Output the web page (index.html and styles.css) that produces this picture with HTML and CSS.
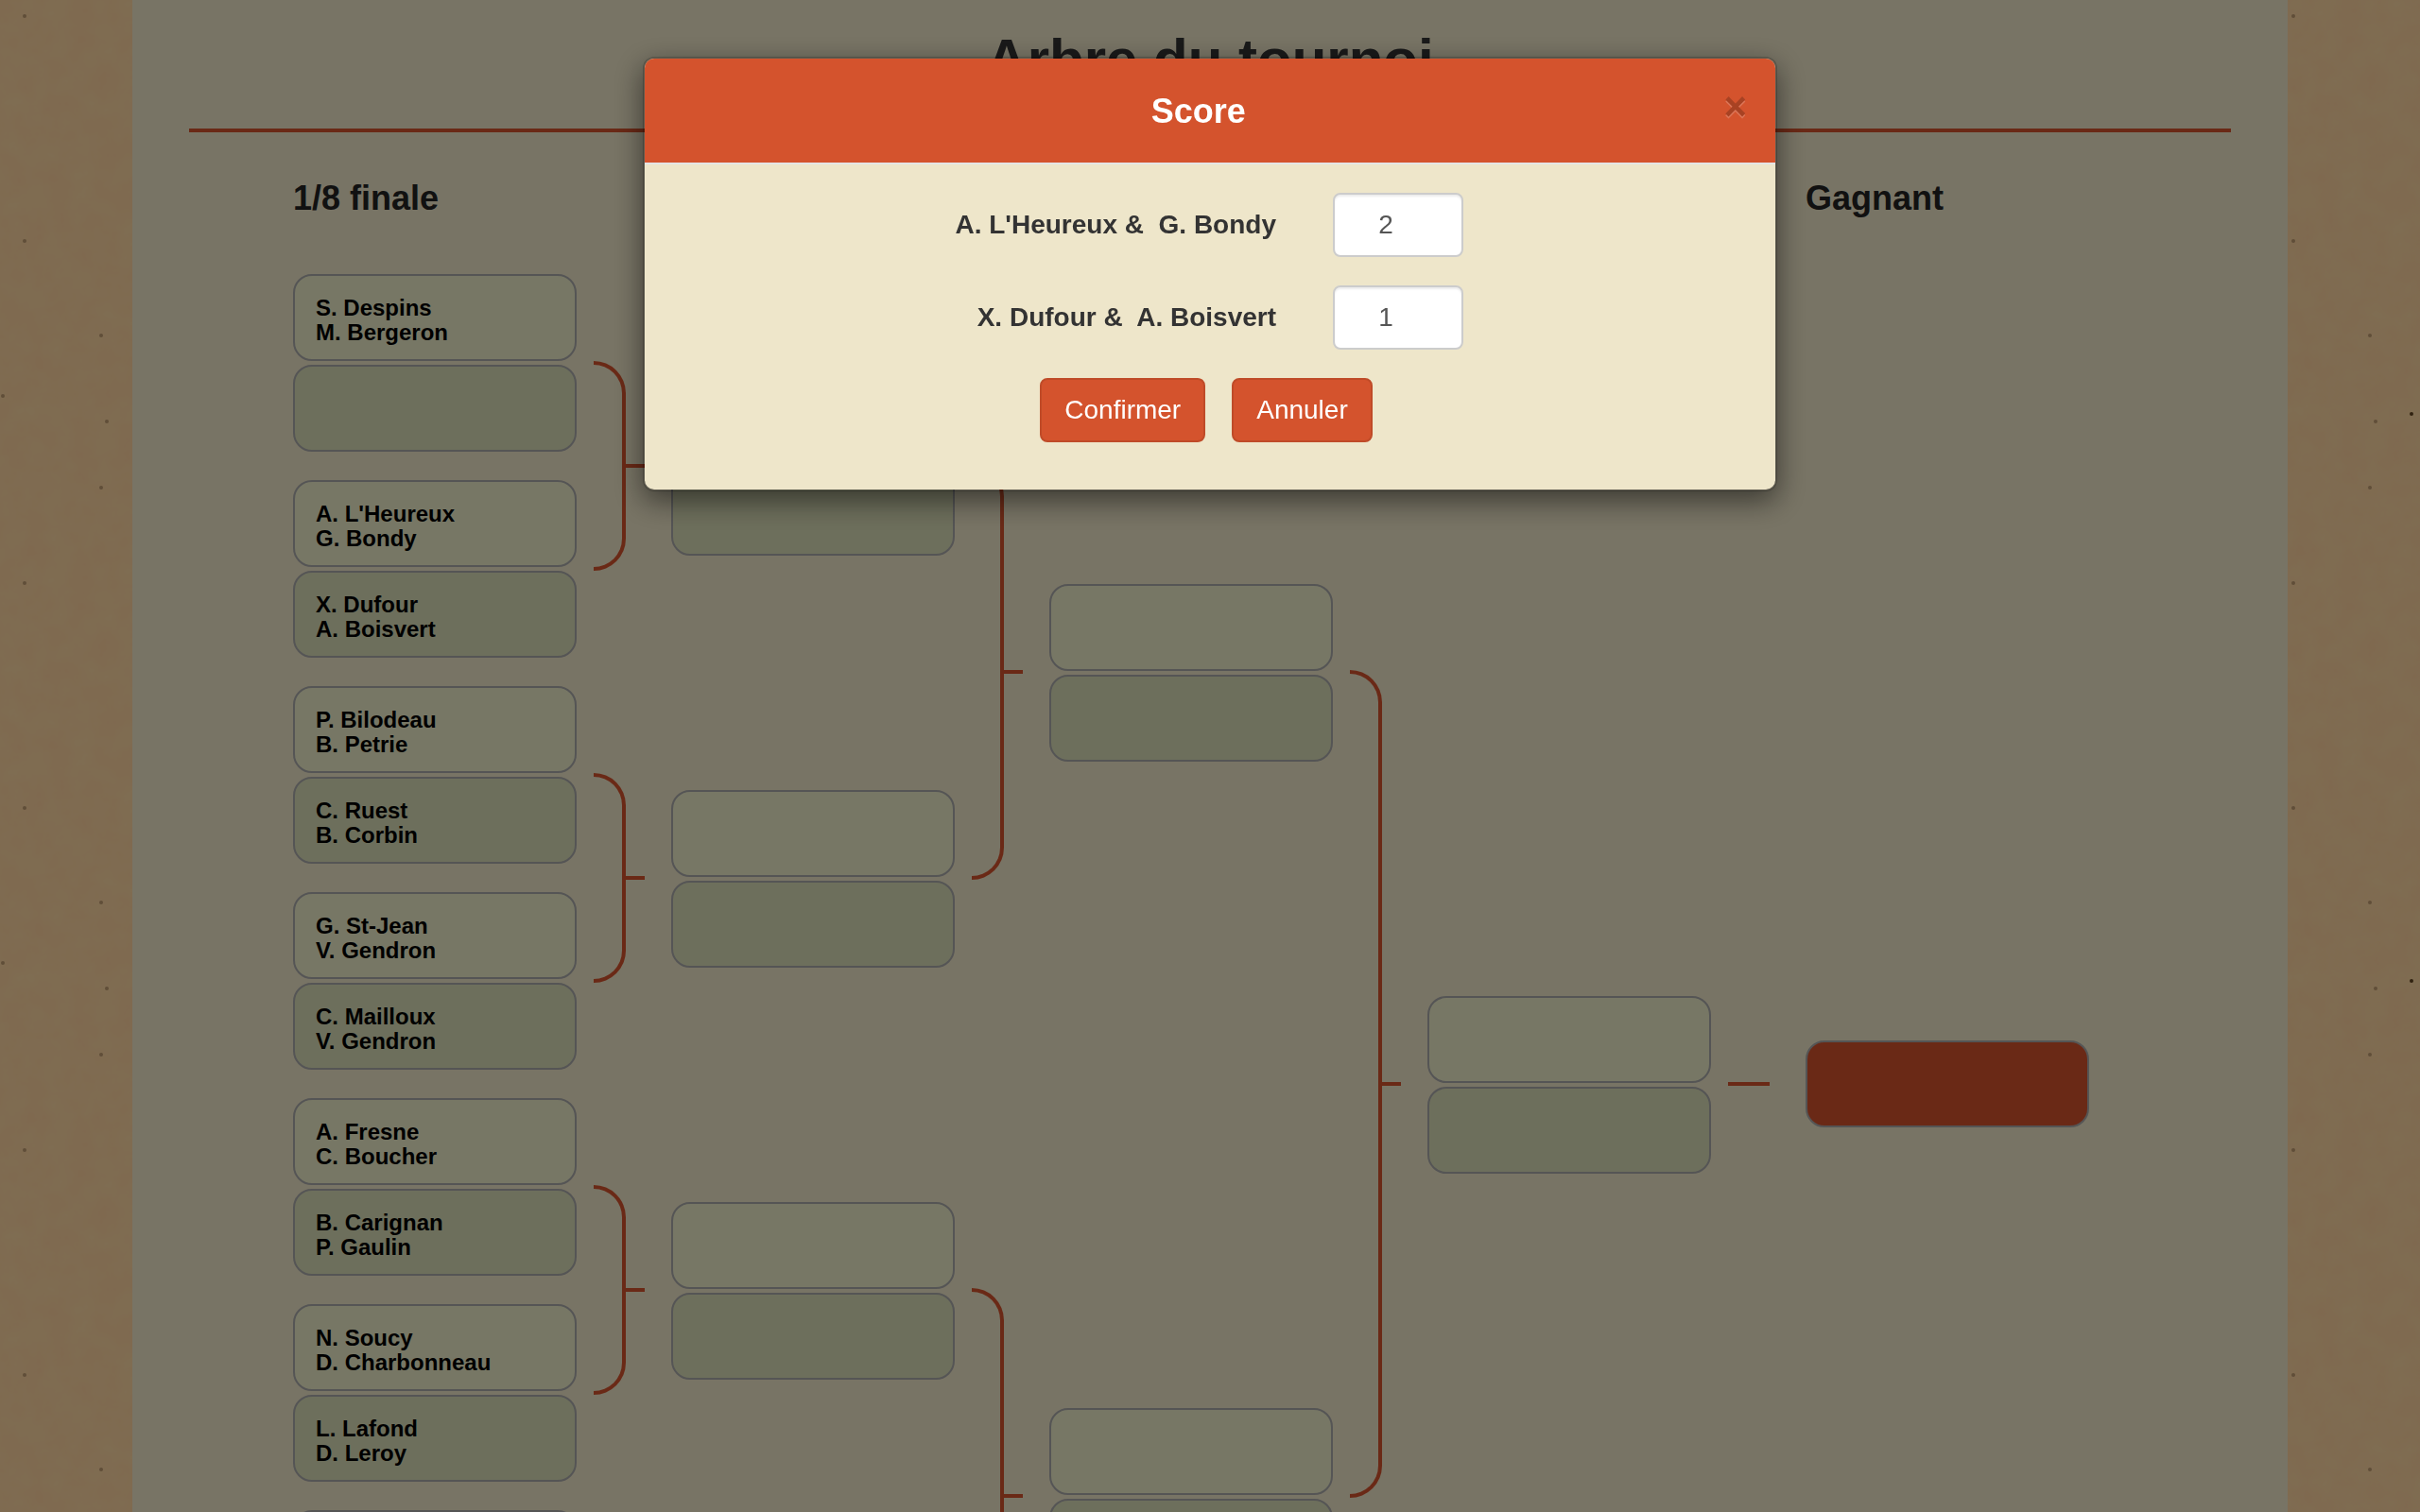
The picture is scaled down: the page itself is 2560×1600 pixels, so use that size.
FILE: index.html
```html
<!DOCTYPE html>
<html lang="fr">
<head>
<meta charset="utf-8">
<title>Arbre du tournoi</title>
<link rel="stylesheet" href="styles.css">
</head>
<body>
<main class="page">
  <h1 class="page-title">Arbre du tournoi</h1>
  <hr class="rule">
  <div class="tree round-names">
    <h2 class="round-name">1/8 finale</h2>
    <h2 class="round-name round-name-winner">Gagnant</h2>
  </div>
  <div class="tree">
    <div class="round round-first">
      <div class="match"><div class="team">S. Despins<br>M. Bergeron</div><div class="team"></div></div>
      <div class="match"><div class="team">A. L'Heureux<br>G. Bondy</div><div class="team">X. Dufour<br>A. Boisvert</div></div>
      <div class="match"><div class="team">P. Bilodeau<br>B. Petrie</div><div class="team">C. Ruest<br>B. Corbin</div></div>
      <div class="match"><div class="team">G. St-Jean<br>V. Gendron</div><div class="team">C. Mailloux<br>V. Gendron</div></div>
      <div class="match"><div class="team">A. Fresne<br>C. Boucher</div><div class="team">B. Carignan<br>P. Gaulin</div></div>
      <div class="match"><div class="team">N. Soucy<br>D. Charbonneau</div><div class="team">L. Lafond<br>D. Leroy</div></div>
      <div class="match"><div class="team"></div><div class="team"></div></div>
      <div class="match"><div class="team"></div><div class="team"></div></div>
    </div>
    <div class="links">
      <div class="link"><span class="bracket"></span><span class="stub"></span></div>
      <div class="link"><span class="bracket"></span><span class="stub"></span></div>
      <div class="link"><span class="bracket"></span><span class="stub"></span></div>
      <div class="link"><span class="bracket"></span><span class="stub"></span></div>
    </div>
    <div class="round">
      <div class="match"><div class="team"></div><div class="team"></div></div>
      <div class="match"><div class="team"></div><div class="team"></div></div>
      <div class="match"><div class="team"></div><div class="team"></div></div>
      <div class="match"><div class="team"></div><div class="team"></div></div>
    </div>
    <div class="links">
      <div class="link"><span class="bracket"></span><span class="stub"></span></div>
      <div class="link"><span class="bracket"></span><span class="stub"></span></div>
    </div>
    <div class="round">
      <div class="match"><div class="team"></div><div class="team"></div></div>
      <div class="match"><div class="team"></div><div class="team"></div></div>
    </div>
    <div class="links">
      <div class="link"><span class="bracket"></span><span class="stub"></span></div>
    </div>
    <div class="round">
      <div class="match"><div class="team"></div><div class="team"></div></div>
    </div>
    <div class="links">
      <div class="link"><span class="stub stub-long"></span></div>
    </div>
    <div class="round">
      <div class="team team-winner"></div>
    </div>
  </div>
</main>

<div class="backdrop">
  <div class="modal" role="dialog" aria-modal="true" aria-labelledby="score-title">
    <div class="modal-header">
      <h4 class="modal-title" id="score-title">Score</h4>
      <button class="close" type="button">×</button>
    </div>
    <form class="modal-body">
      <div class="score-row">
        <label class="score-label" for="score-1">A. L'Heureux &amp;&nbsp; G. Bondy</label>
        <input class="score-input" id="score-1" type="number" value="2">
      </div>
      <div class="score-row">
        <label class="score-label" for="score-2">X. Dufour &amp;&nbsp; A. Boisvert</label>
        <input class="score-input" id="score-2" type="number" value="1">
      </div>
      <div class="actions">
        <button class="btn" type="button">Confirmer</button>
        <button class="btn" type="button">Annuler</button>
      </div>
    </form>
  </div>
</div>
</body>
</html>
```
FILE: styles.css
```css
* { box-sizing: border-box; }

html { overflow: hidden; }

body {
  margin: 0;
  height: 100vh;
  overflow: hidden;
  font-family: "Liberation Sans", Arial, sans-serif;
  color: #333;
  /* kraft paper tile: soft mottling and a few specks */
  background: #ffd8a2 url("data:image/svg+xml,%3Csvg xmlns='http://www.w3.org/2000/svg' width='600' height='600'%3E%3Cfilter id='n' x='0' y='0' width='100%25' height='100%25' color-interpolation-filters='sRGB'%3E%3CfeTurbulence type='fractalNoise' baseFrequency='.04' numOctaves='4' seed='4' stitchTiles='stitch'/%3E%3CfeColorMatrix values='0 0 0 0 1 0 0 0 0 .82 0 0 0 0 .62 1.2 0 0 0 -.2'/%3E%3C/filter%3E%3Crect width='600' height='600' fill='%23fedaa4'/%3E%3Crect width='600' height='600' filter='url(%23n)'/%3E%3Cg fill='%23c09c70'%3E%3Ccircle cx='26' cy='17' r='2'/%3E%3Ccircle cx='26' cy='255' r='2'/%3E%3Ccircle cx='107' cy='355' r='2'/%3E%3Ccircle cx='113' cy='446' r='2'/%3E%3Ccircle cx='107' cy='516' r='2'/%3E%3Ccircle cx='3' cy='419' r='2'/%3E%3C/g%3E%3Ccircle cx='151' cy='438' r='2' fill='%23604420'/%3E%3C/svg%3E");
}

.page {
  max-width: 2280px;
  margin: 0 auto;
  padding: 30px 60px;
  background: #f0e8ca;
}

.page-title {
  margin: 0;
  font-size: 60px;
  line-height: 66px;
  text-align: center;
}

.rule {
  height: 4px;
  margin: 40px 0 50px;
  border: 0;
  background: #d4532d;
}

/* five rounds with a connector column between each */
.tree {
  display: grid;
  grid-template-columns: repeat(4, 300px 100px) 300px;
  padding-left: 110px;
}

.round-names { margin-bottom: 45px; }

.round-name {
  margin: 0;
  font-size: 36px;
  line-height: 40px;
  color: #222;
}

.round-name-winner { grid-column: 9; }

.round,
.links {
  display: grid;
  grid-auto-rows: 1fr;
  align-items: center;
}

.round-first { grid-auto-rows: 218px; }

.match {
  display: grid;
  gap: 4px;
}

.round:not(.round-first) .match { padding-top: 2px; }

.team {
  height: 92px;
  padding: 21px 22px 0;
  border: 2px solid #aaa;
  border-radius: 20px;
  background: #eeeeca;
  color: #000;
  font-size: 24px;
  font-weight: bold;
  line-height: 26px;
}

.team + .team { background: #dbdeb8; }

.team.team-winner { background: #d4532d; }

.link {
  display: flex;
  align-items: center;
  height: 100%;
  padding-left: 18px;
}

.bracket {
  width: 34px;
  height: calc(50% + 4px);
  border: solid #d4532d;
  border-width: 4px 4px 4px 0;
  border-radius: 0 34px 34px 0;
}

.stub {
  width: 20px;
  height: 4px;
  background: #d4532d;
}

.stub-long { width: 44px; }

.backdrop {
  position: fixed;
  inset: 0;
  padding: 60px 0;
  background: rgba(0, 0, 0, .5);
}

.modal {
  max-width: 1200px;
  margin: 0 auto;
  overflow: hidden;
  border: 2px solid rgba(0, 0, 0, .2);
  border-radius: 12px;
  background: #eee6ca;
  background-clip: padding-box;
  box-shadow: 0 10px 30px rgba(0, 0, 0, .5);
}

.modal-header {
  display: flex;
  align-items: flex-start;
  padding: 30px 30px 28px;
  border-bottom: 2px solid #e5e5e5;
  background: #d4532d;
  background-clip: padding-box;
}

.modal-title {
  flex: 1;
  margin: 0;
  color: #fff;
  font-size: 36px;
  line-height: 52px;
  text-align: center;
}

.close {
  padding: 0;
  border: 0;
  background: none;
  color: #000;
  font: bold 42px/42px "Liberation Sans", Arial, sans-serif;
  text-shadow: 0 2px 0 #fff;
  opacity: .2;
}

.modal-body { padding: 30px 30px 50px; }

.score-row {
  display: grid;
  grid-template-columns: 638px 138px;
  column-gap: 60px;
  align-items: center;
  margin-bottom: 30px;
}

.score-label {
  font-size: 28px;
  font-weight: bold;
  line-height: 40px;
  text-align: right;
}

.score-input {
  width: 100%;
  height: 68px;
  padding: 12px 50px 12px 24px;
  border: 2px solid #ccc;
  border-radius: 8px;
  background: #fff;
  box-shadow: inset 0 2px 2px rgba(0, 0, 0, .075);
  color: #555;
  font: 28px/40px "Liberation Sans", Arial, sans-serif;
  text-align: center;
  appearance: textfield;
}

.score-input::-webkit-inner-spin-button { display: none; }

.actions {
  display: flex;
  justify-content: center;
  gap: 28px;
  padding-right: 8px;
}

.btn {
  padding: 12px 24px;
  border: 2px solid #bf4b28;
  border-radius: 8px;
  background: #d4532d;
  color: #fff;
  font: 28px/40px "Liberation Sans", Arial, sans-serif;
}
```
